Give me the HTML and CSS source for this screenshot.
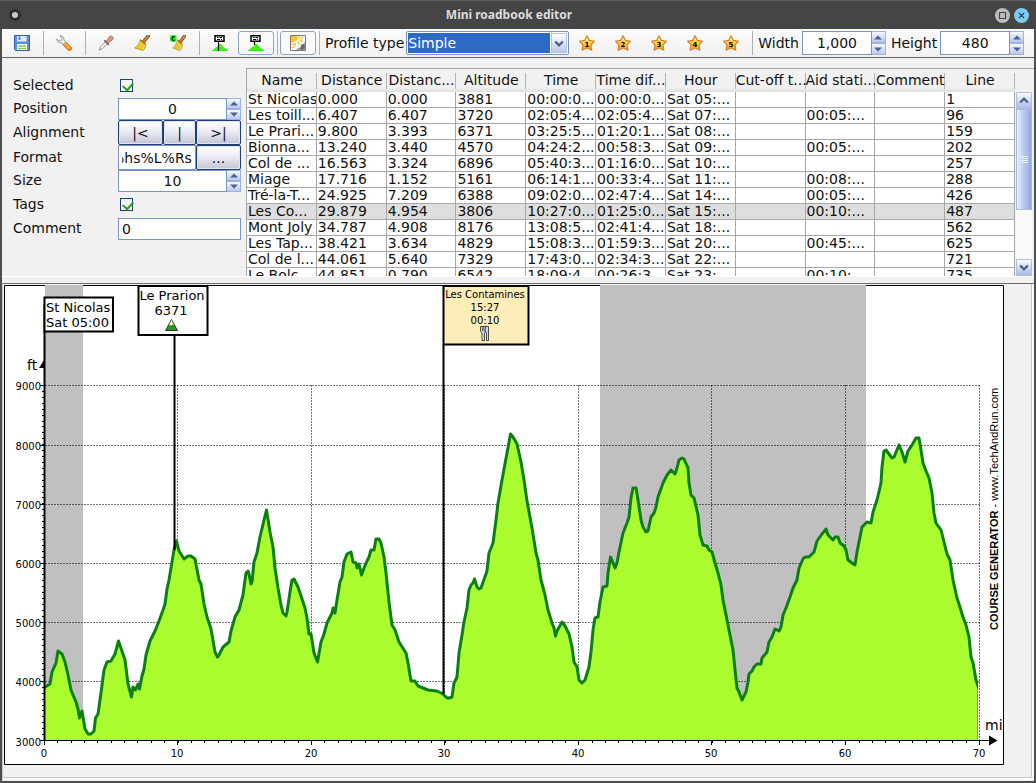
FILE: index.html
```html
<!DOCTYPE html>
<html lang="en">
<head>
<meta charset="utf-8">
<title>Mini roadbook editor</title>
<link rel="stylesheet" href="styles.css">
</head>
<body>
<svg class="defs" width="0" height="0" aria-hidden="true">
  <defs>
    <linearGradient id="gold" x1="0" y1="0" x2="0" y2="1"><stop offset="0" stop-color="#fff3a0"/><stop offset=".5" stop-color="#ffd23c"/><stop offset="1" stop-color="#ffa01e"/></linearGradient>
    <symbol id="star" viewBox="0 0 16 16"><path d="M8 .8 10.4 5.400 15.4 6.2 12 9.9 12.8 15.2 8 12.8 3.2 15.2 4 9.9.6 6.2 5.600 5.400Z" fill="url(#gold)" stroke="#dc7424" stroke-width="1.1" stroke-linejoin="round"/></symbol>
    <symbol id="broom" viewBox="0 0 16 16"><path d="M14.6.6 9.6 6.6" stroke="#8a4a14" stroke-width="3.4" stroke-linecap="round"/><path d="M14.4.9 9.6 6.6" stroke="#d9913c" stroke-width="1.6" stroke-linecap="round"/><path d="M6.4 4.6 11.8 9.2C11.6 12 10.6 14 9 15.5L.8 13C3.8 11 5.4 8.400 6.400 4.600Z" fill="#f5dc3c" stroke="#b8940f" stroke-width=".9"/><path d="M7 6.500 11 10M3.500 13 7.600 8.800M6.300 14 9.400 10" stroke="#c8a418" stroke-width=".9" fill="none"/><path d="M6.800 5.200 11.200 9" stroke="#c4541c" stroke-width="1.200"/></symbol>
    <symbol id="sign" viewBox="0 0 16 16"><path d="M0 0H16V16H0Z" fill="#fff"/><path d="M0 16 4 12.500 6 11.500 8 9 10 10.500 12 13 14 14 16 16Z" fill="#3f0" stroke="#2c0" stroke-width=".5"/><path d="M3 .8H12V6.200H3Z" fill="#fff" stroke="#000" stroke-width="1.500"/><path d="M5 2.500H6.500M7.500 2.500H10M5 4.500H8M9 4.500H10" stroke="#000"/></symbol>
    <symbol id="up" viewBox="0 0 8 5"><path d="M0 4.500 4 .5 8 4.500Z" fill="#48628f"/></symbol>
    <symbol id="down" viewBox="0 0 8 5"><path d="M0 .5 4 4.500 8 .5Z" fill="#48628f"/></symbol>
    <symbol id="chev-up" viewBox="0 0 10 7"><path d="M1.200 5.500 5 1.700 8.800 5.500" fill="none" stroke="#48628f" stroke-width="2.400"/></symbol>
    <symbol id="chev-down" viewBox="0 0 10 7"><path d="M1.200 1.500 5 5.300 8.800 1.500" fill="none" stroke="#48628f" stroke-width="2.400"/></symbol>
    <clipPath id="plot"><path d="M44 285H978V740H44Z"/></clipPath>
  </defs>
</svg>

<div class="window">
  <header class="titlebar">
    <span class="pin"></span>
    <h1>Mini roadbook editor</h1>
    <div class="window-buttons">
      <button type="button" class="round" aria-label="Maximize"><svg width="15" height="15" viewBox="0 0 15 15"><path d="M4.500 4.500H10.500V10.500H4.500Z" fill="none" stroke="#444" stroke-width="1.200"/></svg></button>
      <button type="button" class="round close" aria-label="Close"><svg width="15" height="15" viewBox="0 0 15 15"><path d="M5 5 10 10M10 5 5 10" stroke="#345" stroke-width="1.300"/></svg></button>
    </div>
  </header>

  <div class="toolbar" role="toolbar">
    <button type="button" class="tool" aria-label="Save"><svg width="16" height="16" viewBox="0 0 16 16"><path d="M.5.5H15.500V15.500H1.500L.5 14.500Z" fill="#5b8fdc" stroke="#2f62b4"/><path d="M3 1H12.500V6.500H3Z" fill="#e3edfa"/><path d="M4.500 1.500H6.500V5H4.500Z" fill="#4f81cc"/><path d="M3 9H13V15H3Z" fill="#fff"/><path d="M4 11H12M4 13.500H12" stroke="#7fc95a" stroke-width="1.300"/></svg></button>
    <span class="sep"></span>
    <button type="button" class="tool" aria-label="Settings"><svg width="16" height="16" viewBox="0 0 16 16"><path d="M8.500 8.500 13.500 13.500" stroke="#d9720c" stroke-width="4.600" stroke-linecap="round"/><path d="M8.700 8.500 13.300 13.100" stroke="#ffa83a" stroke-width="2.600" stroke-linecap="round"/><path d="M3.800.8C6.300.3 8.300 2.200 7.900 4.800L9.800 6.900 7.200 9.400 5 7.600C2.500 8.100.5 6.300.7 3.900L3 6 5.400 5.300 5.900 3.100Z" fill="#eceff2" stroke="#8d99a6" stroke-width=".9"/></svg></button>
    <span class="sep"></span>
    <button type="button" class="tool" aria-label="Pick format"><svg width="16" height="16" viewBox="0 0 16 16"><path d="M1.200 15.200 2.500 11.800 7.500 6.600 9.600 8.700 4.400 13.700Z" fill="#f3f3f3" stroke="#8c8c8c" stroke-width=".9"/><path d="M6.800 5.800 10.400 9.400" stroke="#a05a44" stroke-width="1.800" stroke-linecap="round"/><path d="M8.300 6.200 11.300 1.800C13.300-.4 16.600 2.500 14.500 4.700L10.100 8Z" fill="#d59a84" stroke="#a9664f" stroke-width=".8"/></svg></button>
    <button type="button" class="tool" aria-label="Apply format"><svg width="16" height="16"><use href="#broom"/></svg></button>
    <button type="button" class="tool" aria-label="Apply custom format"><svg width="16" height="16" viewBox="0 0 16 16"><g transform="translate(2 0) scale(.88 1)"><use href="#broom" width="16" height="16"/></g><rect width="6.500" height="7" rx="2" fill="#2cf22c"/><path d="M4.700 2.300C3.500 1.400 1.900 2 1.900 3.600S3.500 5.800 4.700 4.900" fill="none" stroke="#000" stroke-width="1.100"/></svg></button>
    <span class="sep"></span>
    <button type="button" class="tool" aria-label="Label to profile"><svg width="16" height="16" viewBox="0 0 16 16"><use href="#sign" width="16" height="16"/><path d="M6.500 6V16" stroke="#000" stroke-width="1.200"/></svg></button>
    <button type="button" class="tool framed" aria-label="Label to bottom"><svg width="16" height="16" viewBox="0 0 16 16"><use href="#sign" width="16" height="16"/><path d="M6.500 6V10" stroke="#000" stroke-width="1.200"/></svg></button>
    <span class="sep"></span>
    <button type="button" class="tool framed" aria-label="Night and day"><svg width="16" height="16" viewBox="0 0 16 16"><path d="M.5.5H15.500V15.500H.5Z" fill="#fff" stroke="#777"/><path d="M1 1H7.500L7 4.500 4.500 7 1 7.500Z" fill="#ffc21f"/><path d="M9 1.500V4M7.500 6.500 9.500 9M5.500 8 5 10.500M1.500 9.500 4 9M12.500 1.500 11 4.500M10 5.500 12.500 6.500M1.500 13 4.500 11.500" stroke="#ffc21f" stroke-width="1.500"/><path d="M15 7V15H6L7.500 13.500 10 12.500 12 10Z" fill="#999"/><path d="M11 9.500A2.600 2.600 0 1 1 10 13.500 3 3 0 0 0 11 9.500Z" fill="#666"/></svg></button>
    <span class="sep"></span>
    <label class="tool-label" for="profile">Profile type</label>
    <span class="combo"><select id="profile"><option>Simple</option></select><span class="combo-arrow"><svg width="10" height="7"><use href="#chev-down"/></svg></span></span>
    <button type="button" class="tool" aria-label="Memory 1"><svg width="16" height="16"><use href="#star"/><text class="star-num" x="8" y="12">1</text></svg></button>
    <button type="button" class="tool" aria-label="Memory 2"><svg width="16" height="16"><use href="#star"/><text class="star-num" x="8" y="12">2</text></svg></button>
    <button type="button" class="tool" aria-label="Memory 3"><svg width="16" height="16"><use href="#star"/><text class="star-num" x="8" y="12">3</text></svg></button>
    <button type="button" class="tool" aria-label="Memory 4"><svg width="16" height="16"><use href="#star"/><text class="star-num" x="8" y="12">4</text></svg></button>
    <button type="button" class="tool" aria-label="Memory 5"><svg width="16" height="16"><use href="#star"/><text class="star-num" x="8" y="12">5</text></svg></button>
    <span class="sep"></span>
    <label class="tool-label" for="width">Width</label>
    <span class="spinner size-spinner"><input id="width" type="text" value="1,000"><span class="steps"><button type="button" aria-label="Increase width"><svg width="8" height="5"><use href="#up"/></svg></button><button type="button" aria-label="Decrease width"><svg width="8" height="5"><use href="#down"/></svg></button></span></span>
    <label class="tool-label" for="height">Height</label>
    <span class="spinner size-spinner"><input id="height" type="text" value="480"><span class="steps"><button type="button" aria-label="Increase height"><svg width="8" height="5"><use href="#up"/></svg></button><button type="button" aria-label="Decrease height"><svg width="8" height="5"><use href="#down"/></svg></button></span></span>
  </div>

  <div class="editor">
    <form class="settings">
      <label for="selected">Selected</label>
      <input id="selected" type="checkbox" checked>
      <label for="position">Position</label>
      <span class="spinner"><input id="position" type="text" value="0"><span class="steps"><button type="button" aria-label="Increase position"><svg width="8" height="5"><use href="#up"/></svg></button><button type="button" aria-label="Decrease position"><svg width="8" height="5"><use href="#down"/></svg></button></span></span>
      <span class="caption">Alignment</span>
      <span class="row"><button type="button" class="push wide">|&lt;</button><button type="button" class="push mid">|</button><button type="button" class="push wide">&gt;|</button></span>
      <label for="format">Format</label>
      <span class="row"><input id="format" class="field" type="text" value="%hs%L%Rs"><button type="button" class="push wide">...</button></span>
      <label for="size">Size</label>
      <span class="spinner"><input id="size" type="text" value="10"><span class="steps"><button type="button" aria-label="Increase size"><svg width="8" height="5"><use href="#up"/></svg></button><button type="button" aria-label="Decrease size"><svg width="8" height="5"><use href="#down"/></svg></button></span></span>
      <label for="tags">Tags</label>
      <input id="tags" type="checkbox" checked>
      <label for="comment">Comment</label>
      <input id="comment" class="field" type="text" value="0">
    </form>

    <div class="grid-pane">
      <div class="grid-view">
        <table>
          <thead><tr><th>Name</th><th>Distance</th><th>Distanc...</th><th>Altitude</th><th>Time</th><th>Time dif...</th><th>Hour</th><th>Cut-off t...</th><th>Aid stati...</th><th>Comment</th><th>Line</th></tr></thead>
          <tbody>
            <tr><td>St Nicolas</td><td>0.000</td><td>0.000</td><td>3881</td><td>00:00:0...</td><td>00:00:0...</td><td>Sat 05:...</td><td></td><td></td><td></td><td>1</td></tr>
            <tr><td>Les toill...</td><td>6.407</td><td>6.407</td><td>3720</td><td>02:05:4...</td><td>02:05:4...</td><td>Sat 07:...</td><td></td><td>00:05:...</td><td></td><td>96</td></tr>
            <tr><td>Le Prari...</td><td>9.800</td><td>3.393</td><td>6371</td><td>03:25:5...</td><td>01:20:1...</td><td>Sat 08:...</td><td></td><td></td><td></td><td>159</td></tr>
            <tr><td>Bionna...</td><td>13.240</td><td>3.440</td><td>4570</td><td>04:24:2...</td><td>00:58:3...</td><td>Sat 09:...</td><td></td><td>00:05:...</td><td></td><td>202</td></tr>
            <tr><td>Col de ...</td><td>16.563</td><td>3.324</td><td>6896</td><td>05:40:3...</td><td>01:16:0...</td><td>Sat 10:...</td><td></td><td></td><td></td><td>257</td></tr>
            <tr><td>Miage</td><td>17.716</td><td>1.152</td><td>5161</td><td>06:14:1...</td><td>00:33:4...</td><td>Sat 11:...</td><td></td><td>00:08:...</td><td></td><td>288</td></tr>
            <tr><td>Tré-la-T...</td><td>24.925</td><td>7.209</td><td>6388</td><td>09:02:0...</td><td>02:47:4...</td><td>Sat 14:...</td><td></td><td>00:05:...</td><td></td><td>426</td></tr>
            <tr class="current"><td>Les Co...</td><td>29.879</td><td>4.954</td><td>3806</td><td>10:27:0...</td><td>01:25:0...</td><td>Sat 15:...</td><td></td><td>00:10:...</td><td></td><td>487</td></tr>
            <tr><td>Mont Joly</td><td>34.787</td><td>4.908</td><td>8176</td><td>13:08:5...</td><td>02:41:4...</td><td>Sat 18:...</td><td></td><td></td><td></td><td>562</td></tr>
            <tr><td>Les Tap...</td><td>38.421</td><td>3.634</td><td>4829</td><td>15:08:3...</td><td>01:59:3...</td><td>Sat 20:...</td><td></td><td>00:45:...</td><td></td><td>625</td></tr>
            <tr><td>Col de l...</td><td>44.061</td><td>5.640</td><td>7329</td><td>17:43:0...</td><td>02:34:3...</td><td>Sat 22:...</td><td></td><td></td><td></td><td>721</td></tr>
            <tr><td>Le Bolc...</td><td>44.851</td><td>0.790</td><td>6542</td><td>18:09:4...</td><td>00:26:3...</td><td>Sat 23:...</td><td></td><td>00:10:...</td><td></td><td>735</td></tr>
          </tbody>
        </table>
      </div>
      <div class="scrollbar">
        <button type="button" aria-label="Scroll up"><svg width="10" height="7"><use href="#chev-up"/></svg></button>
        <div class="thumb"><i></i><i></i><i></i><i></i></div>
        <button type="button" class="end" aria-label="Scroll down"><svg width="10" height="7"><use href="#chev-down"/></svg></button>
      </div>
    </div>
  </div>

  <div class="divider"></div>

  <main class="profile-pane">
    <svg class="profile" width="1000" height="480" viewBox="4 285 1000 480" role="img" aria-label="Elevation profile">
      <path class="frame" d="M4.500 285.500H1003.500V764.500H4.500Z"/>
      <path class="night" d="M45 285H83V740H45ZM600 285H866V740H600Z"/>
      <path class="gridline" d="M45 385.500H980M45 445.500H980M45 504.500H980M45 563.500H980M45 622.500H980M45 681.500H980"/>
      <path class="gridline" d="M177.500 385V740M311.500 385V740M444.500 385V740M578.500 385V740M711.500 385V740M845.500 385V740M979.500 385V740"/>
      <path class="area" clip-path="url(#plot)" d="M40 750V687H45L50 684 52 672 56 663 58 651 62 654 65 662 68 675 71 690 76 702 78 709 79.500 718 82 711 85 729 88 734 91 734 94 731 95.500 718 98 714 101 693 104 670 107 662 111 661 115 654 118.500 641 125 660 128 684 131.500 697 133 687 135.500 690 138 684 139.500 689 142 676 144 669 146 655 150 641 155 631 159 621 163 610 165 604 167 589 169 580 172 562 174 550 176.500 541 179 551 184 559 188 556 191 556 195 559 199 580 201 584 204 604 207 617 211 629 215 652 217.500 657 219 655 223 647 229 642 231 631 235 617 239 610 243 595 246 573 248 571 249 574 251 584 252 582 254 562 257 553 260 537 264 520 266.500 510 270 532 273 547 275 568 278 588 281 605 283 613 286 616 287 612 290 592 292 580 294 579 298 587 305 608 307 618 309 634 311 634 314 653 317.500 662 321 642 324 634 327 623 332 613 333 608 335 613 337 600 340 582 342 577 344 562 347 554 351 552 353 562 356 563 357 568 359 564 361.500 575 364 568 367 561 369 557 371 550 374 550 376 539 379 539 381 543 384 557 386 573 389 602 392 625 395 630 399 642 406 653 408 663 411 681 415 681 418 686 428 690 437 691 443 694 447 698 449 698 452 697 454 683 457 677 459 653 462 635 464 622 467 608 469 590 471 585 473 583 474.500 579 477 587 479 589 481 588 487 571 489 553 493 543 496 520 498 503 502 480 507 453 510.500 434 513 437 517 444 521 462 524 480 527 501 532 528 536 553 538 560 541 580 545 595 548 610 552 623 554 628 555.500 636 557 631 562 622 565 626 569 634 572 647 574 662 577 667 579 680 582 683 585 680 589 667 591 652 593 630 595 618 598 617 600 602 603 587 607 586 608 573 610.500 557 613 563 615 568 617 563 619 552 623 533 627 523 629 517 631 498 633 488 636 488 638 500 641 520 643 527 646 532 648 531 651 517 654 513 656 507 658 497 663 483 667 475 671 470 675 474 677 468 679 460 682 458 684 459 688 468 689 483 691 495 694 498 698 515 700 535 703 545 707 546 709 550 712 552 715 563 718 573 721 585 723 600 727 620 730 635 733 650 735 670 737 688 739 692 742 700 746 692 748 682 749 674 752 671 754 667 757 664 761 664 762 658 767 652 769 642 772 637 775 629 779 631 781 627 783 615 786 608 790 597 793 588 797 580 799 568 803 559 805 557 809 557 814 552 817 541 822 534 826 529 828 535 833 540 835 537 838 537 840 543 844 546 846 550 848 560 852 563 855 565 857 552 862 527 867 522 871 523 873 512 877 500 881 483 882 467 884 451 886 450 889 454 892 458 894 457 899 445 902 452 905 462 908 451 912 445 916 438 919 438 921 450 923 463 926 471 929 478 932 493 934 513 936 523 941 530 944 542 947 554 950 560 953 580 957 598 959 604 963 617 966 625 969 637 971 657 973 663 976 680 979 689V750Z"/>
      <path class="minor" stroke-dasharray="1 4.917" d="M43 385V740"/>
      <path class="minor" stroke-dasharray="1 12.357" d="M44 742H980"/>
      <path class="major" d="M40 385.500H44M40 445.500H44M40 504.500H44M40 563.500H44M40 622.500H44M40 681.500H44M40 740.500H990M44.500 741V745M177.500 741V745M311.500 741V745M444.500 741V745M578.500 741V745M711.500 741V745M845.500 741V745M979.500 741V745"/>
      <path d="M989 735.500 997.500 740.500 989 745.500ZM39 368 44 360V368Z"/>
      <path class="pole" d="M44.500 304V740"/>
      <path class="pole" d="M174.500 336V550M443.500 345V694"/>
      <g class="axis-text end"><text x="41" y="390">9000</text><text x="41" y="450">8000</text><text x="41" y="509">7000</text><text x="41" y="568">6000</text><text x="41" y="627">5000</text><text x="41" y="686">4000</text><text x="41" y="746">3000</text></g>
      <g class="axis-text middle"><text x="44" y="757">0</text><text x="177" y="757">10</text><text x="311" y="757">20</text><text x="444" y="757">30</text><text x="578" y="757">40</text><text x="711" y="757">50</text><text x="845" y="757">60</text><text x="979" y="757">70</text></g>
      <text class="unit" x="27" y="370">ft</text><text class="unit" x="985" y="730">mi</text>
      <path class="flag" d="M44.500 297.500H113V331.500H44.500Z"/>
      <path class="flag" d="M138.500 286H207.500V335H138.500Z"/>
      <path class="flag cream" d="M443.500 286H528.500V344.500H443.500Z"/>
      <g class="flag-text"><text x="46" y="312">St Nicolas</text><text x="46" y="327">Sat 05:00</text></g>
      <g class="flag-text middle"><text x="172" y="300">Le Prarion</text><text x="171" y="315">6371</text></g>
      <g class="axis-text middle"><text x="485" y="298">Les Contamines</text><text x="485" y="311">15:27</text><text x="485" y="324">00:10</text></g>
      <path d="M171.500 319.500 177.500 330.500H165.500Z" fill="#1f9a1c" stroke="#222" stroke-width=".9"/><path d="M171.500 320 174 325.500 172.500 324.500 171 325.500 169 325Z" fill="#fff5c8"/>
      <g stroke="#222" stroke-width=".8" fill="#d3dce8"><path d="M480.500 326.500V331L482 333V340.500H484.500V333.500L485.500 330V326.500Z"/><path d="M485.500 326.500H488.500V340.500H486.500V333L485 330Z"/></g><path d="M482.500 327V331M483.800 327V331" stroke="#222" stroke-width=".6"/>
      <text class="credit" transform="translate(998 630) rotate(-90)"><tspan class="strong">COURSE GENERATOR</tspan> - www.TechAndRun.com</text>
    </svg>
  </main>
</div>
<script src="script.js"></script>
</body>
</html>
```
FILE: styles.css
```css
* { box-sizing: border-box; }
body { margin: 0; background: #464646; color: #111; font: 14px/16px "DejaVu Sans", sans-serif; }
button, input, select { font: inherit; color: inherit; margin: 0; padding: 0; border-radius: 0; }
svg { display: block; flex: none; }
.defs { position: absolute; }
.window { display: flex; flex-direction: column; min-height: 100vh; background: #f1f1f1; border: 2px solid #4e4e4e; border-top: 0; }

.titlebar { display: flex; align-items: center; height: 29px; margin: 0 -2px; padding: 0 7px 0 9px; background: #454545; border-top: 1px solid #5e5e5e; border-radius: 4px 4px 0 0; }
.titlebar h1 { flex: 1; margin: 0; padding-left: 2px; text-align: center; font: bold 12px/16px "Noto Sans", sans-serif; color: #dcdcdc; }
.pin { width: 12px; height: 12px; border-radius: 50%; background: #c9c9c9; border: 3px solid #2c2c2c; }
.window-buttons { display: flex; gap: 4px; }
.round { width: 15px; height: 15px; border: 0; border-radius: 50%; background: #bdbdbd; }
.round.close { background: #7ccbf5; }

.toolbar { display: flex; align-items: center; height: 29px; padding: 0 2px; background: linear-gradient(#fbfbfb, #f1f1f1); border-bottom: 1px solid #666; }
.tool { display: flex; align-items: center; justify-content: center; width: 36px; height: 24px; flex: none; border: 1px solid transparent; border-radius: 3px; background: none; }
.tool.framed { border-color: #8fa3c8; background: #fafafa; }
.sep { flex: none; width: 1px; height: 24px; margin: 0 2px 0 3px; background: #b0b0b0; }
.tool-label { padding: 0 2px 0 3px; white-space: nowrap; }
.star-num { font: bold 7px "DejaVu Sans", sans-serif; text-anchor: middle; }
.combo { display: flex; flex: 0 1 163px; height: 24px; padding: 1px; background: #fff; border: 1px solid #7a94bf; border-radius: 2px; }
.combo select { flex: 1; min-width: 0; padding: 0; appearance: none; border: 0; background: #2c6ac4; color: #fff; }
.combo-arrow { display: flex; align-items: center; justify-content: center; width: 16px; margin-left: 1px; border: 1px solid #b4c2dd; background: linear-gradient(#fff, #b9c8ee); }

.spinner { display: flex; height: 22px; }
.spinner input { flex: 1; min-width: 0; height: 100%; padding: 0; text-align: center; background: #fff; border: 1px solid #7a94bf; }
.steps { display: grid; grid-template-rows: 1fr 1fr; width: 14px; }
.steps button { display: flex; align-items: center; justify-content: center; border: 1px solid #9fb3dc; border-left: 0; background: linear-gradient(#f4f7ff, #b8c8ee); }
.size-spinner { width: 84px; height: 24px; margin: 0 2px 0 1px; }

.editor { display: flex; height: 219px; border-bottom: 1px solid #fff; }
.settings { display: grid; grid-template-columns: 105px 123px; grid-template-rows: 25px 22px 25px 25px 22px 25px 24px; align-content: start; align-items: center; flex: none; padding: 15px 5px 0 11px; }
.settings label, .caption { padding-bottom: 2px; }
.settings .row { display: flex; align-self: stretch; }
.settings input[type="checkbox"] { display: grid; width: 13px; height: 13px; margin-left: 2px; appearance: none; background: #f4f4f4; border: 1px solid #1d3f75; }
.settings input[type="checkbox"]::before { content: ""; width: 8px; height: 5px; margin: 2px 0 0 2px; border: solid #1fa01f; border-width: 0 0 2px 2px; transform: rotate(-48deg); }
.field { flex: 1; min-width: 0; height: 22px; padding: 0 3px; background: #fff; border: 1px solid #7a94bf; }
.row .field { height: 100%; }
.push { border: 1px solid #1d3f75; border-radius: 2px; background: linear-gradient(#fff, #ececf4 45%, #c4c4d4); box-shadow: inset 0 0 0 1px #dfe6f2; }
.push.wide { width: 45px; }
.push.mid { width: 33px; }

.grid-pane { display: flex; flex: 1; min-width: 0; height: 208px; margin-top: 10px; border: solid #a8a8a8; border-width: 1px 0 0 1px; overflow: hidden; }
.grid-view { flex: 1; min-width: 0; overflow: hidden; }
table { width: 100%; table-layout: fixed; border-collapse: separate; border-spacing: 0; }
th, td { height: 16px; padding: 0 0 0 1px; overflow: hidden; white-space: nowrap; text-align: left; line-height: 15px; border: solid #a8a8a8; border-width: 0 1px 1px 0; }
td { background: #fff; }
th { height: 23px; padding: 0; font-weight: normal; text-align: center; border: 0; background: linear-gradient(90deg, #b4b4b4, #b4b4b4) right center / 1px 16px no-repeat, linear-gradient(#f1f1f1 80%, #dedede); }
.current td { background: #dedede; }
.scrollbar { display: flex; flex-direction: column; flex: none; width: 16px; margin: 23px 2px 0 1px; background: #fafafa; }
.scrollbar button { display: flex; align-items: center; justify-content: center; height: 17px; border: 1px solid #b0bede; background: linear-gradient(#fafbff, #a9bbe6); }
.thumb { display: grid; gap: 1px; align-content: center; justify-content: center; height: 101px; border: 1px solid #a8b8dc; background: linear-gradient(90deg, #e8eeff, #b8c8f4 50%, #96aadb); }
.thumb i { width: 7px; height: 1px; background: #eef2ff; }
.scrollbar .end { margin-top: auto; }

.divider { height: 6px; }
.profile-pane { flex: 1; padding: 1px 0 0 1px; border: solid #6e6e6e; border-width: 1px 0 0 1px; border-left-color: #c8c8c8; margin-bottom: 1px; box-shadow: inset -2px -2px 0 #fff, inset -3px -3px 0 #c8c8c8; }
.frame { fill: #fff; stroke: #000; }
.night { fill: #c0c0c0; }
.gridline { fill: none; stroke: #000; stroke-opacity: .55; stroke-dasharray: 2 1; }
.area { fill: #abfc2f; stroke: #0b800f; stroke-width: 3px; stroke-linejoin: round; }
.minor { fill: none; stroke: #000; stroke-width: 2px; shape-rendering: crispEdges; }
.major { fill: none; stroke: #000; shape-rendering: crispEdges; }
.pole { fill: none; stroke: #000; stroke-width: 2px; }
.flag { fill: #fff; stroke: #000; stroke-width: 2px; }
.flag.cream { fill: #ffedb9; }
.axis-text { font-size: 10px; }
.flag-text { font-size: 13px; }
.unit { font-size: 14px; }
.middle { text-anchor: middle; }
.end { text-anchor: end; }
.credit { font: 11px "Liberation Sans", Arial, sans-serif; }
.strong { font-weight: bold; }
```
FILE: script.js
```js
// Keep the end of a long format string in view.
const format = document.getElementById("format");
format.scrollLeft = format.scrollWidth;
```
